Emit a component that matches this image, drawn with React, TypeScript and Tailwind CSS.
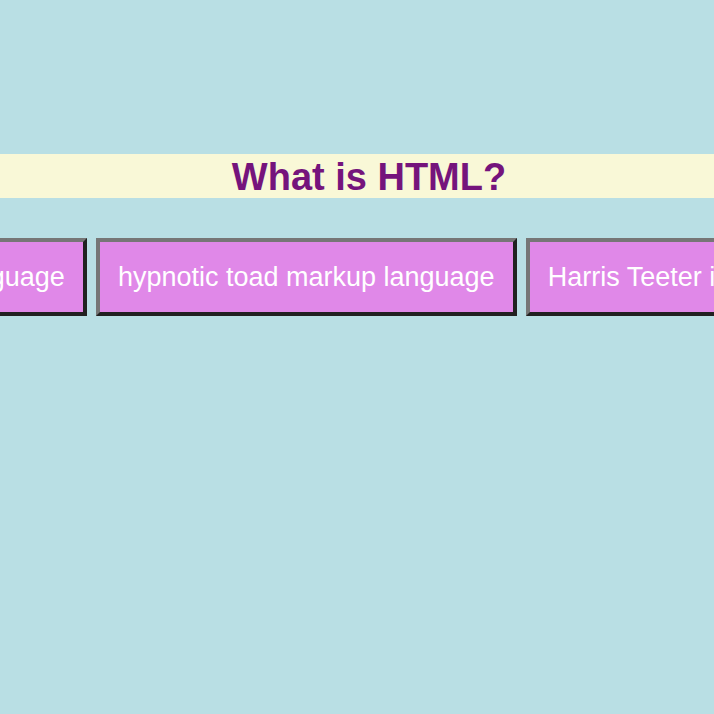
const answers = [
  "hypertext markup language",
  "hypnotic toad markup language",
  "Harris Teeter is my markup language",
];

export default function App() {
  return (
    <main className="min-h-screen overflow-hidden bg-[#b9dfe4] pt-[154px] font-['Liberation_Sans',Arial,sans-serif]">
      <h1 className="h-11 bg-[#f9f8d7] pl-6 text-center text-[38px] leading-[46px] font-bold text-[#75147c]">
        What is HTML?
      </h1>
      <div className="mt-10 flex justify-center gap-[9px] pl-3">
        {answers.map((answer) => (
          <button
            key={answer}
            type="button"
            className="h-[78px] shrink-0 border-4 border-t-[#767676] border-r-[#212121] border-b-[#212121] border-l-[#767676] bg-[#e088e8] px-[18px] text-[27px] whitespace-nowrap text-white"
          >
            {answer}
          </button>
        ))}
      </div>
    </main>
  );
}
